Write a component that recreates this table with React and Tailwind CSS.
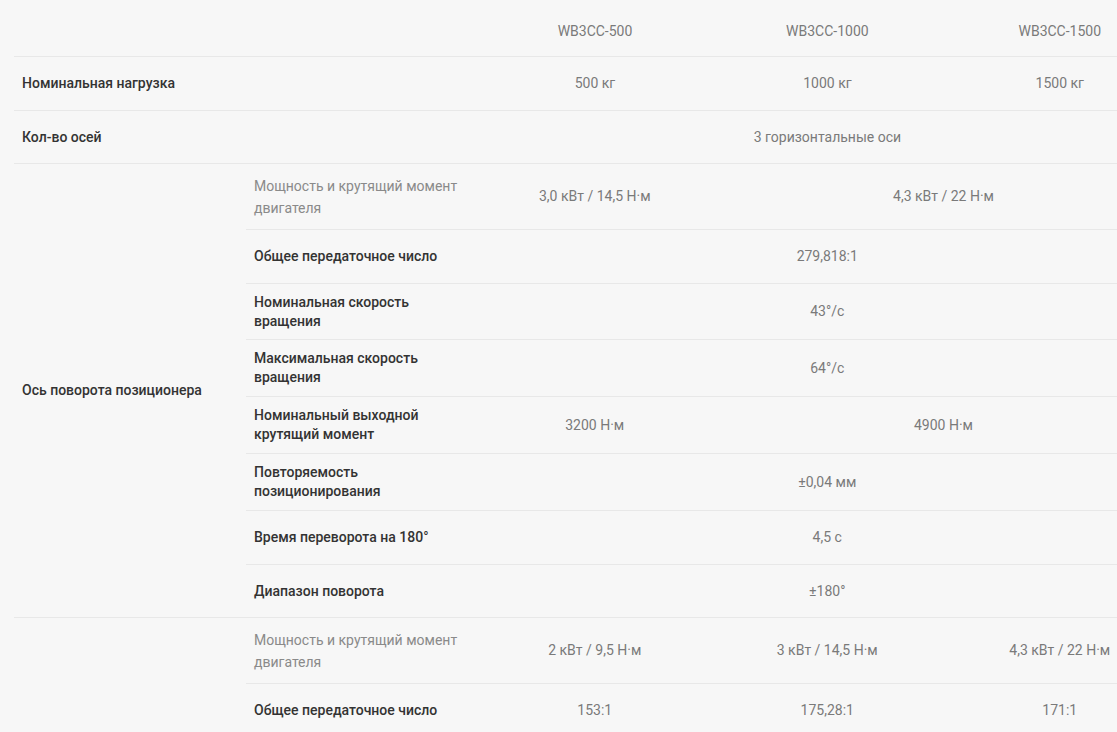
import React from "react";

const font = { fontFamily: "Roboto, 'Noto Sans', sans-serif" };

function Val({ children, span = "" }) {
  return (
    <div className={`flex items-center justify-center text-[14px] text-[#7a7a7a] whitespace-nowrap ${span}`}>
      {children}
    </div>
  );
}

function SubLabel({ lines, light }) {
  return (
    <div
      className={`flex flex-col justify-center pl-2 whitespace-nowrap ${
        light
          ? "text-[14px] leading-[22px] text-[#8a8a8a]"
          : "text-[14px] leading-[19px] font-medium text-[#333333]"
      }`}
    >
      {lines.map((l, i) => (
        <span key={i}>{l}</span>
      ))}
    </div>
  );
}

function SubRow({ h, lines, light, border = true, children }) {
  return (
    <div className={`grid grid-cols-4 ${h} ${border ? "border-b border-[#e8e8e8]" : ""}`}>
      <SubLabel lines={lines} light={light} />
      {children}
    </div>
  );
}

export default function App() {
  return (
    <div className="w-full h-[732px] overflow-hidden bg-[#f7f7f7]" style={font}>
      <div className="ml-[14px] w-[1162px]">
        {/* header */}
        <div className="grid grid-cols-5 h-[57px] border-b border-[#e8e8e8] pt-[6px]">
          <div />
          <div />
          <Val>WB3CC-500</Val>
          <Val>WB3CC-1000</Val>
          <Val>WB3CC-1500</Val>
        </div>

        <div className="grid grid-cols-5 h-[54px] border-b border-[#e8e8e8]">
          <div className="flex items-center pl-2 text-[14px] font-medium text-[#333333] whitespace-nowrap">
            Номинальная нагрузка
          </div>
          <div />
          <Val>500 кг</Val>
          <Val>1000 кг</Val>
          <Val>1500 кг</Val>
        </div>

        <div className="grid grid-cols-5 h-[53px] border-b border-[#e8e8e8]">
          <div className="flex items-center pl-2 text-[14px] font-medium text-[#333333] whitespace-nowrap">
            Кол-во осей
          </div>
          <div />
          <Val span="col-span-3">3 горизонтальные оси</Val>
        </div>

        {/* group 1 */}
        <div className="flex border-b border-[#e8e8e8]">
          <div className="w-[232px] shrink-0 flex items-center pl-2 text-[14px] font-medium text-[#333333] whitespace-nowrap">
            Ось поворота позиционера
          </div>
          <div className="flex-1">
            <SubRow h="h-[66px]" light lines={["Мощность и крутящий момент", "двигателя"]}>
              <Val>3,0 кВт / 14,5 Н·м</Val>
              <Val span="col-span-2">4,3 кВт / 22 Н·м</Val>
            </SubRow>
            <SubRow h="h-[54px]" lines={["Общее передаточное число"]}>
              <Val span="col-span-3">279,818:1</Val>
            </SubRow>
            <SubRow h="h-[56px]" lines={["Номинальная скорость", "вращения"]}>
              <Val span="col-span-3">43°/с</Val>
            </SubRow>
            <SubRow h="h-[57px]" lines={["Максимальная скорость", "вращения"]}>
              <Val span="col-span-3">64°/с</Val>
            </SubRow>
            <SubRow h="h-[57px]" lines={["Номинальный выходной", "крутящий момент"]}>
              <Val>3200 Н·м</Val>
              <Val span="col-span-2">4900 Н·м</Val>
            </SubRow>
            <SubRow h="h-[57px]" lines={["Повторяемость", "позиционирования"]}>
              <Val span="col-span-3">±0,04 мм</Val>
            </SubRow>
            <SubRow h="h-[54px]" lines={["Время переворота на 180°"]}>
              <Val span="col-span-3">4,5 с</Val>
            </SubRow>
            <SubRow h="h-[52px]" border={false} lines={["Диапазон поворота"]}>
              <Val span="col-span-3">±180°</Val>
            </SubRow>
          </div>
        </div>

        {/* group 2 */}
        <div className="flex border-b border-[#e8e8e8]">
          <div className="w-[232px] shrink-0" />
          <div className="flex-1">
            <SubRow h="h-[66px]" light lines={["Мощность и крутящий момент", "двигателя"]}>
              <Val>2 кВт / 9,5 Н·м</Val>
              <Val>3 кВт / 14,5 Н·м</Val>
              <Val>4,3 кВт / 22 Н·м</Val>
            </SubRow>
            <SubRow h="h-[54px]" lines={["Общее передаточное число"]}>
              <Val>153:1</Val>
              <Val>175,28:1</Val>
              <Val>171:1</Val>
            </SubRow>
          </div>
        </div>
      </div>
    </div>
  );
}
